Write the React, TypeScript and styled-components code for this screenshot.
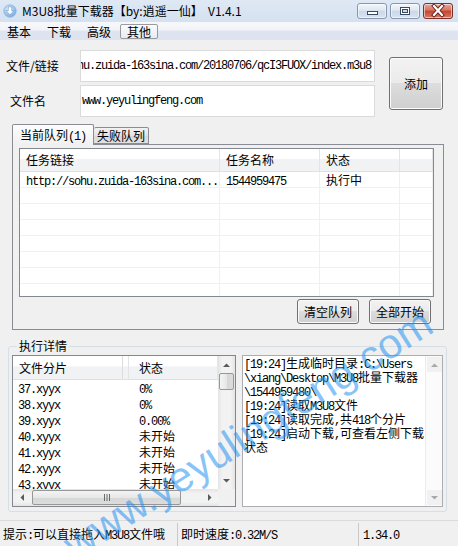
import React from "react";
import styled, { createGlobalStyle } from "styled-components";

const GlobalStyle = createGlobalStyle`
  html, body {
    margin: 0;
    padding: 0;
    background: #f0f0f0;
  }

  body {
    font-family: "Noto Sans CJK SC", "Liberation Sans", sans-serif;
    font-size: 12px;
    color: #000;
  }

  * {
    box-sizing: border-box;
  }
`;

const menuItems = ["基本", "下载", "高级", "其他"];

const queueColumns = [
  { title: "任务链接", width: 200 },
  { title: "任务名称", width: 100 },
  { title: "状态", width: 80 },
  { title: "", width: 0 },
];

const queueRows = [
  ["http://sohu.zuida-163sina.com...", "1544959475", "执行中", ""],
  ["", "", "", ""],
  ["", "", "", ""],
  ["", "", "", ""],
  ["", "", "", ""],
  ["", "", "", ""],
  ["", "", "", ""],
  ["", "", "", ""],
];

const pieceRows = [
  ["37.xyyx", "0%"],
  ["38.xyyx", "0%"],
  ["39.xyyx", "0.00%"],
  ["40.xyyx", "未开始"],
  ["41.xyyx", "未开始"],
  ["42.xyyx", "未开始"],
  ["43.xyyx", "未开始"],
];

const logLines = [
  "[19:24]生成临时目录:C:\\Users",
  "\\xiang\\Desktop\\M3U8批量下载器",
  "\\1544959480\\",
  "[19:24]读取M3U8文件",
  "[19:24]读取完成,共418个分片",
  "[19:24]启动下载,可查看左侧下载",
  "状态",
];

// ascii runs get the narrow mono face, like SimSun's half-width glyphs
const isLatin = /^[\x20-\x7e]+$/;

const Mixed = ({ text }: { text: string }) => (
  <>
    {text
      .split(/([\x20-\x7e]+)/)
      .filter(Boolean)
      .map((part, i) =>
        isLatin.test(part) ? (
          <Latin key={i}>{part}</Latin>
        ) : (
          <React.Fragment key={i}>{part}</React.Fragment>
        )
      )}
  </>
);

type Dir = "up" | "down" | "left" | "right";

const Arrow = ({ dir, color = "#5a5a5a" }: { dir: Dir; color?: string }) => {
  const vertical = dir === "up" || dir === "down";
  const paths: Record<Dir, string> = {
    up: "M0 4L3.5 0.5L7 4Z",
    down: "M0 0L3.5 3.5L7 0Z",
    left: "M4 0L0.5 3.5L4 7Z",
    right: "M0 0L3.5 3.5L0 7Z",
  };
  return (
    <svg
      width={vertical ? 7 : 4}
      height={vertical ? 4 : 7}
      viewBox={vertical ? "0 0 7 4" : "0 0 4 7"}
    >
      <path d={paths[dir]} fill={color} />
    </svg>
  );
};

const App = () => {
  return (
    <Window>
      <GlobalStyle />
      <TitleBar>
        <svg width="14" height="14" viewBox="0 0 14 14">
          <defs>
            <radialGradient id="ic" cx="40%" cy="35%" r="70%">
              <stop offset="0%" stopColor="#e8f3fd" />
              <stop offset="100%" stopColor="#6ea6e0" />
            </radialGradient>
          </defs>
          <circle cx="7" cy="7" r="6.2" fill="url(#ic)" stroke="#8cb6e4" strokeWidth="0.8" />
          <path d="M5.3 2.8h3.4v3.9h2.2L7 10.8 3.1 6.7h2.2z" fill="#fff" stroke="#4f86c4" strokeWidth="0.5" />
        </svg>
        <TitleText>{"M3U8批量下载器【by:逍遥一仙】  V1.4.1"}</TitleText>
        <CaptionButtons>
          <CaptionButton>
            <svg width="28" height="14" viewBox="0 0 28 14">
              <rect x="9.5" y="7.5" width="10" height="3" fill="#fff" stroke="#3b4a60" />
            </svg>
          </CaptionButton>
          <CaptionButton>
            <svg width="28" height="14" viewBox="0 0 28 14">
              <rect x="9.5" y="3.5" width="9" height="7" fill="#fff" stroke="#3b4a60" />
              <rect x="11.5" y="5.5" width="5" height="3" fill="#cdd9ea" stroke="#3b4a60" />
            </svg>
          </CaptionButton>
          <CaptionButton $close>
            <svg width="28" height="14" viewBox="0 0 28 14">
              <path d="M10 2L18 11M18 2L10 11" stroke="#5b1d16" strokeWidth="4" strokeLinecap="square" />
              <path d="M10 2L18 11M18 2L10 11" stroke="#fff" strokeWidth="2.2" strokeLinecap="square" />
            </svg>
          </CaptionButton>
        </CaptionButtons>
      </TitleBar>

      <MenuBar>
        {menuItems.map((item) => (
          <MenuItem key={item} $active={item === "其他"}>
            {item}
          </MenuItem>
        ))}
      </MenuBar>

      <FormRow>
        <Fields>
          <FieldLabel>文件/链接</FieldLabel>
          <Field $end>
            http://sohu.zuida-163sina.com/20180706/qcI3FUOX/index.m3u8
          </Field>
          <FieldLabel $indent>文件名</FieldLabel>
          <Field>www.yeyulingfeng.com</Field>
        </Fields>
        <Button $w={54} $h={53}>
          添加
        </Button>
      </FormRow>

      <TabStrip>
        <Tab $selected>
          <Mixed text="当前队列(1)" />
        </Tab>
        <Tab>失败队列</Tab>
      </TabStrip>
      <TabPanel>
        <QueueList>
          <HeadRow $h={23}>
            {queueColumns.map((col, i) => (
              <HeadCell key={i} $w={col.width}>
                {col.title}
              </HeadCell>
            ))}
          </HeadRow>
          {queueRows.map((row, r) => (
            <Row key={r}>
              {row.map((value, c) => (
                <Cell key={c} $w={queueColumns[c].width}>
                  <Mixed text={value} />
                </Cell>
              ))}
            </Row>
          ))}
        </QueueList>
        <ButtonRow>
          <Button $w={62} $h={25}>
            清空队列
          </Button>
          <Button $w={62} $h={25}>
            全部开始
          </Button>
        </ButtonRow>
      </TabPanel>

      <GroupBox>
        <Legend>执行详情</Legend>
        <GroupInner>
          <PieceList>
            <PieceView>
              <HeadRow $h={24}>
                <HeadCell $w={116} $double>
                  文件分片
                </HeadCell>
                <HeadCell $pad={10}>状态</HeadCell>
              </HeadRow>
              {pieceRows.map(([name, state]) => (
                <PieceRow key={name}>
                  <Cell $w={116} $plain $pad={5}>
                    <Latin>{name}</Latin>
                  </Cell>
                  <Cell $plain $pad={10}>
                    <Mixed text={state} />
                  </Cell>
                </PieceRow>
              ))}
            </PieceView>
            <VScroll>
              <ScrollArrow>
                <Arrow dir="up" />
              </ScrollArrow>
              <VTrack>
                <VThumb />
              </VTrack>
              <ScrollArrow>
                <Arrow dir="down" />
              </ScrollArrow>
            </VScroll>
            <HScroll>
              <ScrollArrow>
                <Arrow dir="left" />
              </ScrollArrow>
              <HTrack>
                <HThumb>
                  <svg width="8" height="7" viewBox="0 0 8 7">
                    <path d="M1.5 0v7M4 0v7M6.5 0v7" stroke="#6a6a6a" strokeWidth="1" />
                  </svg>
                </HThumb>
              </HTrack>
              <ScrollArrow>
                <Arrow dir="right" />
              </ScrollArrow>
            </HScroll>
            <Corner />
          </PieceList>

          <LogBox>
            <LogText>
              {logLines.map((line, i) => (
                <div key={i}>
                  <Mixed text={line} />
                </div>
              ))}
            </LogText>
            <LogScroll>
              <ScrollArrow $boxed>
                <Arrow dir="up" color="#a8a8a8" />
              </ScrollArrow>
              <VTrack />
              <ScrollArrow $boxed>
                <Arrow dir="down" color="#a8a8a8" />
              </ScrollArrow>
            </LogScroll>
          </LogBox>
        </GroupInner>
      </GroupBox>

      <StatusBar>
        <StatusPanel $w={178}>
          <Mixed text="提示:可以直接拖入M3U8文件哦" />
        </StatusPanel>
        <StatusPanel $w={181}>
          <Mixed text="即时速度:0.32M/S" />
        </StatusPanel>
        <StatusPanel $last>
          <Latin>1.34.0</Latin>
        </StatusPanel>
      </StatusBar>

      <Watermark>www.yeyulingfeng.com</Watermark>
    </Window>
  );
};

const Latin = styled.span`
  font-family: "Liberation Mono", "DejaVu Sans Mono", monospace;
  letter-spacing: -1.2px;
`;

const Window = styled.div`
  position: relative;
  display: flex;
  flex-direction: column;

  width: 458px;
  height: 546px;

  background: #f0f0f0;
  overflow: hidden;
`;

const TitleBar = styled.div`
  display: flex;
  align-items: center;
  flex: none;

  height: 22px;
  padding: 0 5px 0 3px;

  background: linear-gradient(#dfe9f5, #d5e1f0);
`;

const TitleText = styled.div`
  flex: 1;
  margin-left: 5px;

  font-size: 12px;
  line-height: 16px;
  white-space: pre;
`;

const CaptionButtons = styled.div`
  display: flex;
  gap: 3px;
  align-self: flex-start;

  margin-top: 3px;
`;

const CaptionButton = styled.div<{ $close?: boolean }>`
  display: flex;
  align-items: center;
  justify-content: center;

  width: 30px;
  height: 16px;

  border: 1px solid ${(p) => (p.$close ? "#7b3028" : "#8797b0")};
  border-radius: 3px;
  background: ${(p) =>
    p.$close
      ? "linear-gradient(#e9a99c, #d9705f 45%, #c7432f 50%, #d47a63)"
      : "linear-gradient(#f2f6fb, #dfe7f2 45%, #cbd7e8 50%, #d9e3f0)"};
  box-shadow: inset 0 0 0 1px rgba(255, 255, 255, 0.55);
`;

const MenuBar = styled.div`
  display: flex;
  align-items: center;
  flex: none;

  height: 18px;

  background: linear-gradient(#f7f8fb 0%, #f1f3f8 45%, #dfe5f0 50%, #dde3ef 100%);
`;

const MenuItem = styled.div<{ $active?: boolean }>`
  height: 15px;
  padding: 0 6px;
  margin-right: ${(p) => (p.$active ? 0 : 2)}px;

  line-height: 13px;
  border: 1px solid ${(p) => (p.$active ? "#9a9a9a" : "transparent")};
  border-radius: 2px;
  background: ${(p) => (p.$active ? "linear-gradient(#fbfbfc, #e8ebf1)" : "none")};
`;

const FormRow = styled.div`
  display: flex;
  align-items: center;

  margin-top: 10px;
  padding-left: 6px;
`;

const Fields = styled.div`
  display: grid;
  grid-template-columns: 74px 295px;
  row-gap: 3px;
  align-items: center;
`;

const FieldLabel = styled.div<{ $indent?: boolean }>`
  padding-left: ${(p) => (p.$indent ? 4 : 0)}px;

  font-size: 12px;
  line-height: 16px;
`;

const Field = styled.div<{ $end?: boolean }>`
  display: flex;
  align-items: center;
  justify-content: ${(p) => (p.$end ? "flex-end" : "flex-start")};

  height: 32px;
  padding: 0 3px 0 1px;

  font-family: "Liberation Mono", "DejaVu Sans Mono", monospace;
  letter-spacing: -1.2px;
  line-height: 14px;
  white-space: nowrap;

  background: #fff;
  border: 1px solid #dadada;
  overflow: hidden;
`;

const Button = styled.button<{ $w: number; $h: number }>`
  flex: none;
  width: ${(p) => p.$w}px;
  height: ${(p) => p.$h}px;
  margin-left: 14px;
  padding: 0;

  font-family: "Noto Sans CJK SC", sans-serif;
  font-size: 12px;
  color: #000;

  border: 1px solid #707070;
  border-radius: 3px;
  background: linear-gradient(#f2f2f2 0%, #ebebeb 49%, #dddddd 50%, #cfcfcf 100%);
  box-shadow: inset 0 0 0 1px #fbfbfb;
`;

const TabStrip = styled.div`
  position: relative;
  z-index: 1;
  display: flex;
  align-items: flex-end;

  height: 21px;
  margin-top: 7px;
  padding-left: 12px;
`;

const Tab = styled.div<{ $selected?: boolean }>`
  height: ${(p) => (p.$selected ? 21 : 17)}px;
  margin-bottom: ${(p) => (p.$selected ? 0 : 1)}px;
  padding: 0 ${(p) => (p.$selected ? 7 : 3)}px;

  line-height: ${(p) => (p.$selected ? 20 : 16)}px;
  white-space: nowrap;

  border: 1px solid #898c95;
  border-bottom: ${(p) => (p.$selected ? "none" : "1px solid #898c95")};
  border-left: ${(p) => (p.$selected ? "1px solid #898c95" : "none")};
  border-radius: 2px 2px 0 0;
  background: ${(p) =>
    p.$selected ? "linear-gradient(#fdfdfd, #f0f0f0)" : "linear-gradient(#f2f2f2, #e3e3e3 50%, #d9d9d9 51%, #e1e1e1)"};
`;

const TabPanel = styled.div`
  width: 432px;
  height: 186px;
  margin: -1px 0 0 12px;
  padding: 3px 0 0 6px;

  border: 1px solid #898c95;
  background: #f0f0f0;
`;

const QueueList = styled.div`
  width: 415px;
  height: 149px;

  border: 1px solid #828790;
  background: #fff;
  overflow: hidden;
`;

const HeadRow = styled.div<{ $h: number }>`
  display: flex;

  height: ${(p) => p.$h}px;

  line-height: ${(p) => p.$h - 1}px;
  border-bottom: 1px solid #dfe0e2;
  background: linear-gradient(#ffffff 0%, #ffffff 45%, #f1f2f4 46%, #f1f2f4 100%);
`;

const HeadCell = styled.div<{ $w?: number; $pad?: number; $double?: boolean }>`
  ${(p) => (p.$w ? `width: ${p.$w}px; flex: none;` : "flex: 1;")}
  padding-left: ${(p) => p.$pad ?? 6}px;

  white-space: nowrap;
  overflow: hidden;

  border-right: 1px solid #e3e4e6;
  background: ${(p) =>
    p.$double
      ? "linear-gradient(90deg, transparent calc(100% - 6px), #dcdde0 calc(100% - 6px), #dcdde0 calc(100% - 5px), transparent calc(100% - 5px))"
      : "none"};
`;

const Row = styled.div`
  display: flex;

  height: 16px;

  border-bottom: 1px solid #f0f0f0;
`;

const Cell = styled.div<{ $w?: number; $pad?: number; $plain?: boolean }>`
  ${(p) => (p.$w ? `width: ${p.$w}px; flex: none;` : "flex: 1;")}
  padding-left: ${(p) => p.$pad ?? 6}px;

  line-height: 15px;
  white-space: nowrap;
  overflow: hidden;

  border-right: ${(p) => (p.$plain ? "none" : "1px solid #f0f0f0")};
`;

const ButtonRow = styled.div`
  display: flex;
  justify-content: flex-end;
  gap: 10px;

  margin-top: 2px;
  padding-right: 12px;

  ${Button} {
    margin-left: 0;
  }
`;

const GroupBox = styled.fieldset`
  width: 439px;
  min-width: 0;
  margin: 8px 0 0 8px;
  padding: 1px 2px 4px 3px;

  border: 1px solid #d5dfe5;
  border-radius: 3px;
`;

const Legend = styled.legend`
  margin-left: 5px;
  padding: 0 2px;

  font-size: 12px;
  line-height: 16px;
`;

const GroupInner = styled.div`
  display: flex;
  gap: 6px;
`;

const PieceList = styled.div`
  display: grid;
  grid-template-columns: 1fr 17px;
  grid-template-rows: 1fr 17px;

  width: 224px;
  height: 152px;

  border: 1px solid #828790;
  background: #fff;
`;

const PieceView = styled.div`
  overflow: hidden;
`;

const PieceRow = styled.div`
  display: flex;

  height: 16px;
`;

const ScrollArrow = styled.div<{ $boxed?: boolean }>`
  display: flex;
  align-items: center;
  justify-content: center;
  flex: none;

  width: ${(p) => (p.$boxed ? 15 : 17)}px;
  height: ${(p) => (p.$boxed ? 15 : 17)}px;

  background: ${(p) => (p.$boxed ? "#f1f1f1" : "none")};
`;

const VScroll = styled.div`
  display: flex;
  flex-direction: column;

  background: linear-gradient(90deg, #e4e4e4, #f2f2f2 25%, #f2f2f2 75%, #e4e4e4);
`;

const VTrack = styled.div`
  flex: 1;
`;

const VThumb = styled.div`
  width: 15px;
  height: 17px;
  margin-left: 1px;

  border: 1px solid #979797;
  border-radius: 2px;
  background: linear-gradient(90deg, #f4f4f4, #e7e7e7 50%, #d6d6d6 51%, #dcdcdc);
`;

const HScroll = styled.div`
  display: flex;
  align-items: center;

  background: linear-gradient(#e4e4e4, #f2f2f2 25%, #f2f2f2 75%, #e4e4e4);
`;

const HTrack = styled.div`
  flex: 1;
  height: 17px;
  padding-top: 1px;
`;

const HThumb = styled.div`
  display: flex;
  align-items: center;
  justify-content: center;

  width: 149px;
  height: 15px;
  margin-left: 2px;

  border: 1px solid #979797;
  border-radius: 2px;
  background: linear-gradient(#f4f4f4, #e7e7e7 50%, #d6d6d6 51%, #dcdcdc);
`;

const Corner = styled.div`
  background: #f0f0f0;
`;

const LogBox = styled.div`
  display: flex;

  width: 201px;
  height: 152px;

  border: 1px solid #abadb3;
  background: #fff;
`;

const LogText = styled.div`
  flex: 1;
  padding: 1px 0 0 1px;

  line-height: 12px;
  white-space: nowrap;
  overflow: hidden;
`;

const LogScroll = styled.div`
  display: flex;
  flex-direction: column;
  align-items: center;

  width: 17px;
  padding: 1px 0;

  border-left: 1px solid #ececec;
  background: #fbfbfb;
`;

const StatusBar = styled.div`
  display: flex;
  flex: none;

  height: 26px;
  margin-top: auto;

  border-top: 1px solid #dadada;
  background: #f0f0f0;
`;

const StatusPanel = styled.div<{ $w?: number; $last?: boolean }>`
  ${(p) => (p.$w ? `width: ${p.$w}px; flex: none;` : "flex: 1;")}
  margin: 2px 0 0;
  padding-left: ${(p) => (p.$last ? 4 : 3)}px;

  line-height: 21px;
  white-space: nowrap;

  border-right: ${(p) => (p.$last ? "none" : "1px solid #c9c9c9")};
`;

const Watermark = styled.div`
  position: absolute;
  left: 248px;
  top: 434px;
  transform: translate(-50%, -50%) rotate(-32.5deg);

  font-family: "Liberation Sans", sans-serif;
  font-size: 42px;
  line-height: 1;
  color: rgba(30, 144, 240, 0.55);
  white-space: nowrap;

  pointer-events: none;
`;

export default App;
